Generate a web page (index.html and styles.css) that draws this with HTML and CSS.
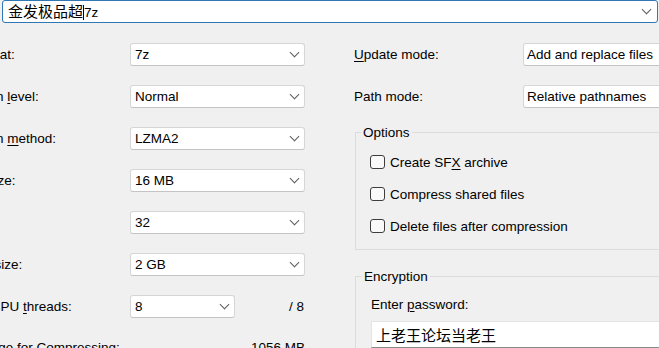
FILE: index.html
```html
<!DOCTYPE html>
<html lang="en">
<head>
    <meta charset="UTF-8">
    <meta name="viewport" content="width=device-width, initial-scale=1.0">
    <title>Add to Archive</title>
    <link rel="stylesheet" href="styles.css">
</head>
<body>
    <div class="dialog">
        <div class="combo combo-focus archive-name">
            <span class="value"><span class="cjk">金发极品超</span><span class="caret"></span>7z</span>
        </div>

        <div class="columns">
            <div class="left-col">
                <div class="field-row">
                    <span class="label">Archive <u>f</u>ormat:</span>
                    <div class="combo"><span class="value">7z</span></div>
                </div>
                <div class="field-row">
                    <span class="label">Compression <u>l</u>evel:</span>
                    <div class="combo"><span class="value">Normal</span></div>
                </div>
                <div class="field-row">
                    <span class="label">Compression <u>m</u>ethod:</span>
                    <div class="combo"><span class="value">LZMA2</span></div>
                </div>
                <div class="field-row">
                    <span class="label"><u>D</u>ictionary size:</span>
                    <div class="combo"><span class="value">16 MB</span></div>
                </div>
                <div class="field-row">
                    <span class="label"><u>W</u>ord size:</span>
                    <div class="combo"><span class="value">32</span></div>
                </div>
                <div class="field-row">
                    <span class="label"><u>S</u>olid Block size:</span>
                    <div class="combo"><span class="value">2 GB</span></div>
                </div>
                <div class="field-row">
                    <span class="label">Number of CPU <u>t</u>hreads:</span>
                    <div class="threads">
                        <div class="combo combo-short"><span class="value">8</span></div>
                        <span class="threads-max">/ 8</span>
                    </div>
                </div>
                <div class="memory-row">
                    <span>Memory usage for Compressing:</span>
                    <span>1056 MB</span>
                </div>
            </div>

            <div class="right-col">
                <div class="field-row">
                    <span class="label label-right"><u>U</u>pdate mode:</span>
                    <div class="combo combo-wide"><span class="value">Add and replace files</span></div>
                </div>
                <div class="field-row path-row">
                    <span class="label label-right">Path mode:</span>
                    <div class="combo combo-wide"><span class="value">Relative pathnames</span></div>
                </div>

                <fieldset class="group options-group">
                    <legend>Options</legend>
                    <label class="check-row"><span class="checkbox"></span><span>Create SF<u>X</u> archive</span></label>
                    <label class="check-row"><span class="checkbox"></span><span>Compress shared files</span></label>
                    <label class="check-row"><span class="checkbox"></span><span>Delete files after compression</span></label>
                </fieldset>

                <fieldset class="group encryption-group">
                    <legend>Encryption</legend>
                    <div class="password-label">Enter <u>p</u>assword:</div>
                    <div class="password-input"><span class="cjk">上老王论坛当老王</span></div>
                </fieldset>
            </div>
        </div>
    </div>
</body>
</html>
```

FILE: styles.css
```css
body {
    margin: 0;
    background: #f0f0f0;
    font-family: "Liberation Sans", "Noto Sans CJK SC", sans-serif;
    font-size: 13.5px;
    line-height: 17px;
    color: #000;
    overflow: hidden;
    width: 659px;
    height: 348px;
}

.dialog {
    width: 659px;
}

.cjk {
    font-family: "Noto Sans CJK SC", "Liberation Sans", sans-serif;
    font-size: 15px;
}

u {
    text-decoration-thickness: 1px;
    text-underline-offset: 2px;
}

/* combo boxes */
.combo {
    box-sizing: border-box;
    height: 23px;
    background: #fff;
    border: 1px solid #d6d6d6;
    border-bottom-color: #c4c4c4;
    border-radius: 3px;
    display: flex;
    align-items: center;
    justify-content: space-between;
    padding: 0 6px 0 4px;
    flex: none;
    width: 175px;
    white-space: nowrap;
}

.combo::after {
    content: "";
    width: 6px;
    height: 6px;
    border-right: 1px solid #5c5c5c;
    border-bottom: 1px solid #5c5c5c;
    transform: rotate(45deg);
    margin-top: -4px;
    flex: none;
}

.combo-focus {
    border-color: #2f77b5;
}

.archive-name {
    width: 656px;
    margin-left: 2px;
    padding-left: 5px;
    padding-right: 7px;
}

.caret {
    display: inline-block;
    width: 1px;
    height: 15px;
    background: #000;
    vertical-align: -3px;
}

.combo-short {
    width: 105px;
}

.combo-wide {
    width: 175px;
    padding-left: 3px;
}

/* columns */
.columns {
    display: flex;
    margin-top: 20px;
}

.left-col {
    flex: none;
    width: 381px;
    margin-left: -76px;
    display: flex;
    flex-direction: column;
    gap: 19px;
}

.right-col {
    flex: none;
    width: 350px;
    margin-left: 49px;
}

.field-row {
    display: flex;
    align-items: center;
    height: 23px;
}

.label {
    flex: none;
    width: 206px;
    white-space: nowrap;
}

.label-right {
    width: 169px;
}

.path-row {
    margin-top: 19px;
}

.threads {
    display: flex;
    align-items: center;
    justify-content: space-between;
    width: 175px;
}

.threads-max {
    padding-right: 1px;
}

.memory-row {
    display: flex;
    justify-content: space-between;
    margin-top: 2px;
    white-space: nowrap;
}

/* group boxes */
.group {
    margin: 0 0 0 1px;
    border: 1px solid #dcdcdc;
    border-right: none;
    padding: 11px 0 13px 14px;
    min-width: 0;
}

.group legend {
    padding: 0 2px;
    margin-left: -9px;
    line-height: 17px;
}

.options-group {
    margin-top: 16px;
}

.encryption-group {
    margin-top: 18px;
    padding-left: 15px;
}

.check-row {
    display: flex;
    align-items: center;
    gap: 5px;
    height: 20px;
    white-space: nowrap;
}

.check-row + .check-row {
    margin-top: 12px;
}

.checkbox {
    box-sizing: border-box;
    width: 15px;
    height: 14px;
    border: 1px solid #3d3d3d;
    border-radius: 3px;
    background: #f9f9f9;
    flex: none;
}

.password-label {
    white-space: nowrap;
}

.password-input {
    box-sizing: border-box;
    margin-top: 8px;
    height: 27px;
    background: #fff;
    border: 1px solid #e3e3e3;
    border-bottom-color: #8a8a8a;
    padding-left: 4px;
    display: flex;
    align-items: center;
    white-space: nowrap;
}
```
